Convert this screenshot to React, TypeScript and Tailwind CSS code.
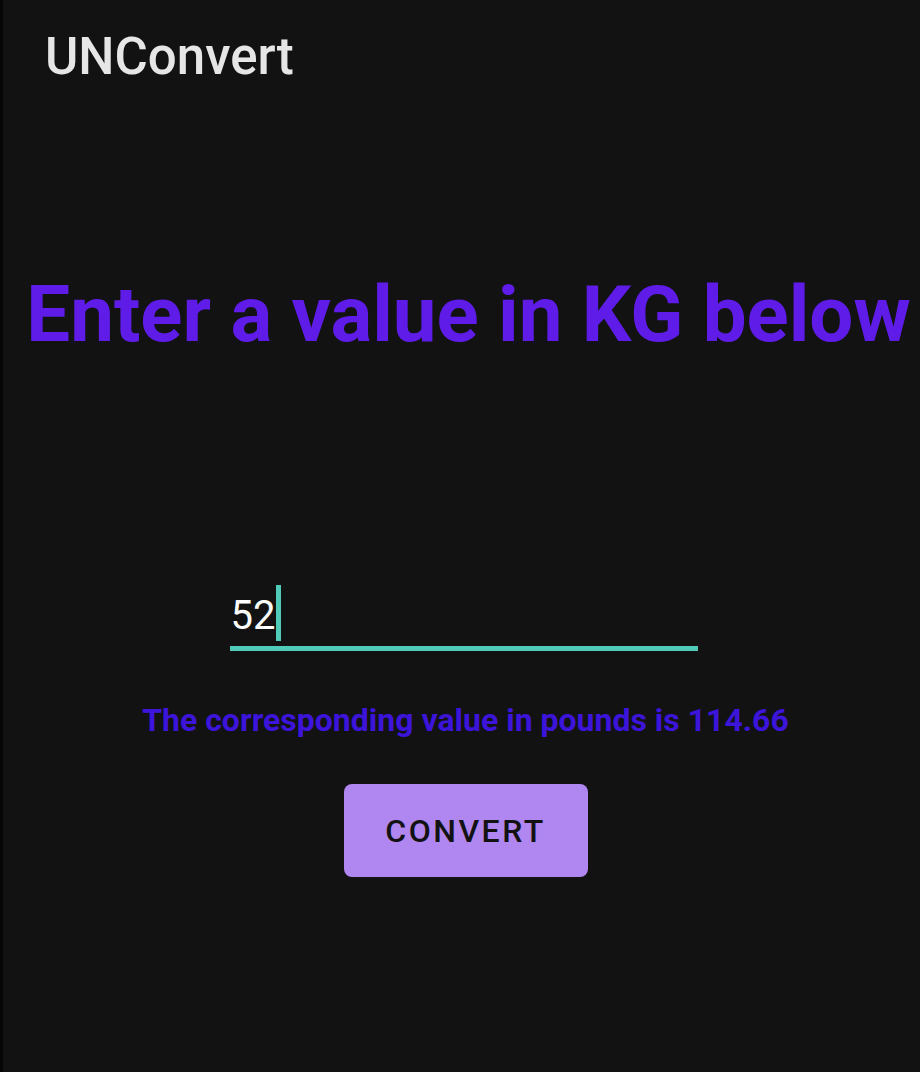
export default function App() {
  return (
    <div
      className="min-h-screen w-full bg-[#121212] border-l-[3px] border-[#060606] text-[#e5e5e5]"
      style={{ fontFamily: 'Roboto, "Noto Sans", sans-serif' }}
    >
      {/* App bar */}
      <div className="pt-[31px] pl-[42px]">
        <h1 className="text-[51px] leading-none font-medium text-[#e6e6e6]">UNConvert</h1>
      </div>

      <div className="flex flex-col items-center pl-[8px]">
        {/* Heading */}
        <h2 className="mt-[194px] ml-[6px] text-[78px] leading-none font-bold text-[#5f1ce9] whitespace-nowrap">
          Enter a value in KG below
        </h2>

        {/* Input field */}
        <div className="mt-[231px] mr-[4px] w-[468px] flex items-end border-b-[5px] border-[#4fcbb8] h-[66px]">
          <span className="ml-[1px] mb-[10px] text-[40px] leading-none text-white">52</span>
          <span className="ml-[1px] mb-[5px] w-[5px] h-[56px] bg-[#4fcbb8]"></span>
        </div>

        {/* Result */}
        <p className="mt-[53px] text-[32px] leading-none font-bold text-[#3c14da] whitespace-nowrap">
          The corresponding value in pounds is 114.66
        </p>

        {/* Button */}
        <button className="mt-[48px] w-[244px] h-[93px] rounded-[8px] bg-[#b086f1] text-[#121212] text-[32px] font-medium tracking-[2.5px] leading-none">
          CONVERT
        </button>
      </div>
    </div>
  );
}
